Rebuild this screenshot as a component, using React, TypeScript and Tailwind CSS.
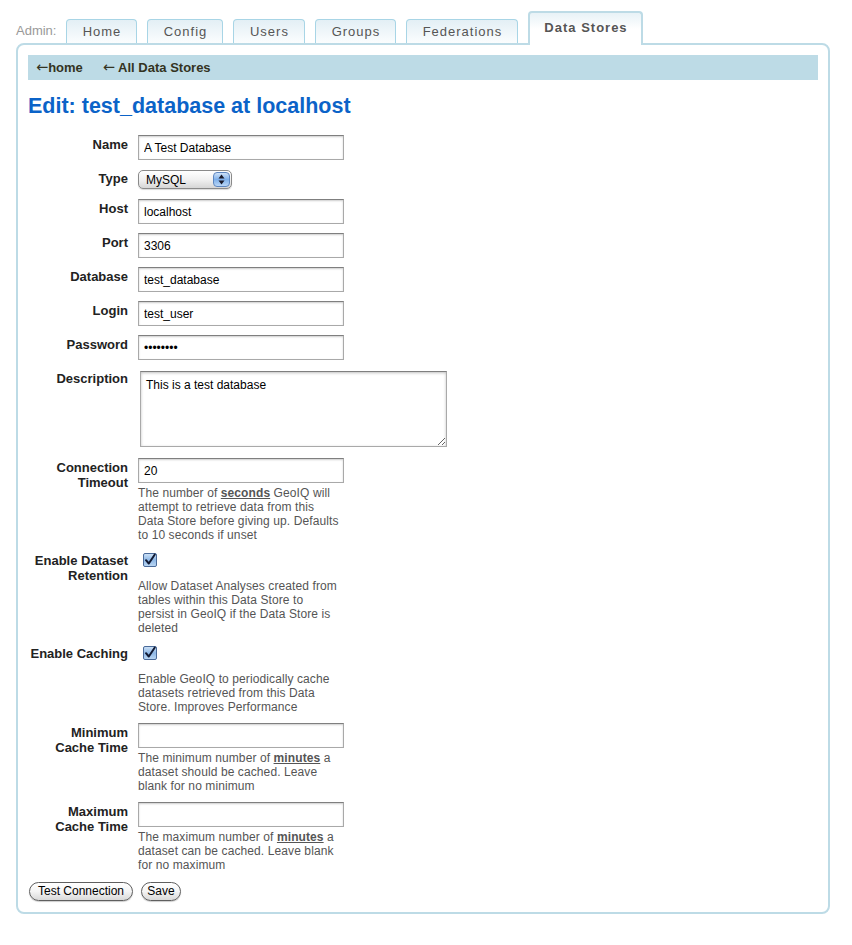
import React from "react";

const tabs = [
  { label: "Home", w: "w-[71px]" },
  { label: "Config", w: "w-[76px]" },
  { label: "Users", w: "w-[72px]" },
  { label: "Groups", w: "w-[81px]" },
  { label: "Federations", w: "w-[112px]" },
];

function Row({ label, children }: { label: React.ReactNode; children: React.ReactNode }) {
  return (
    <div className="flex mb-[9px]">
      <div className="w-[100px] shrink-0 text-right pt-[2px] font-bold text-[13px] leading-[15px] text-[#222]">
        {label}
      </div>
      <div className="ml-[10px]">{children}</div>
    </div>
  );
}

function TextInput({ value, type = "text" }: { value?: string; type?: string }) {
  return (
    <input
      type={type}
      defaultValue={value}
      className="block w-[206px] h-[25px] border border-[#a9a9a9] border-t-[#7f7f7f] shadow-[inset_0_1px_2px_rgba(0,0,0,0.2)] px-[5px] text-[12px] text-black outline-none bg-white"
    />
  );
}

function Help({ children }: { children: React.ReactNode }) {
  return <div className="text-[12px] leading-[14px] text-[#555] whitespace-nowrap tracking-[0.1px]">{children}</div>;
}

function Checkbox() {
  return (
    <svg width="14" height="14" viewBox="0 0 14 14" className="block">
      <defs>
        <linearGradient id="cb" x1="0" y1="0" x2="0" y2="1">
          <stop offset="0" stopColor="#cfe3f7" />
          <stop offset="0.5" stopColor="#8fb8e6" />
          <stop offset="1" stopColor="#bcd8f4" />
        </linearGradient>
      </defs>
      <rect x="0.5" y="0.5" width="13" height="13" rx="1.5" fill="url(#cb)" stroke="#4a6a99" />
      <path d="M3 7.2 L5.8 10.5 L11.8 1.5" fill="none" stroke="#111a33" strokeWidth="2" strokeLinecap="round" strokeLinejoin="round" />
    </svg>
  );
}

function Select() {
  return (
    <div className="relative w-[94px] h-[19px] rounded-[5px] border border-[#8a8a8a] bg-gradient-to-b from-white via-[#f1f1f1] to-[#d6d6d6] shadow-[0_1px_1px_rgba(0,0,0,0.15)]">
      <span className="absolute left-[7px] top-[2px] text-[12px] leading-[14px] text-black">MySQL</span>
      <div className="absolute right-[1px] top-[1px] w-[17px] h-[15px] rounded-[4px] bg-gradient-to-b from-[#cfe2f8] via-[#7fb0ea] to-[#b9d6f6] border border-[#5d86c0] flex items-center justify-center">
        <svg width="7" height="11" viewBox="0 0 7 11">
          <path d="M3.5 0.5 L6.5 4.5 L0.5 4.5 Z" fill="#1a1a2a" />
          <path d="M3.5 10.5 L6.5 6.5 L0.5 6.5 Z" fill="#1a1a2a" />
        </svg>
      </div>
    </div>
  );
}

function Button({ label, w }: { label: string; w: string }) {
  return (
    <button
      className={`${w} h-[19px] rounded-full border border-[#5f5f5f] bg-gradient-to-b from-white via-[#f4f4f4] to-[#d9d9d9] text-[12px] leading-[17px] text-black shadow-[0_1px_1px_rgba(0,0,0,0.2)]`}
    >
      {label}
    </button>
  );
}

export default function App() {
  return (
    <div className="min-h-[945px] bg-white font-['Liberation_Sans',Arial,sans-serif] pt-[11px]">
      {/* Tabs */}
      <div className="relative z-10 flex items-end h-[34px] pl-[16px]">
        <span className="text-[13px] leading-[15px] text-[#999] mb-[7px] mr-[10px]">Admin:</span>
        {tabs.map((t) => (
          <div
            key={t.label}
            className={`${t.w} h-[24px] mb-[2px] mr-[10px] rounded-t-[4px] border border-b-0 border-[#a8d5e6] bg-gradient-to-b from-[#e3eff5] to-[#fbfdfe] flex items-center justify-center text-[13px] tracking-[1px] text-[#555]`}
          >
            {t.label}
          </div>
        ))}
        <div className="w-[115px] h-[34px] rounded-t-[4px] border-2 border-b-0 border-[#bddbe6] bg-gradient-to-b from-[#e8f2f7] via-white to-white flex justify-center pt-[7px] text-[13px] leading-[15px] tracking-[1px] font-bold text-[#555]">
          Data Stores
        </div>
      </div>

      {/* Panel */}
      <div className="-mt-[2px] ml-[16px] w-[814px] border-2 border-[#bddbe6] rounded-[8px] px-[10px] pt-[10px] pb-[11px]">
        <div className="h-[25px] bg-[#bddbe6] flex items-center gap-[20px] pl-[8px] text-[13px] leading-[15px] font-bold text-[#333322]">
          <span>
            <span className="font-['DejaVu_Sans'] font-normal text-[14.5px]">←</span>home
          </span>
          <span>
            <span className="font-['DejaVu_Sans'] font-normal text-[14.5px]">←</span> All Data Stores
          </span>
        </div>

        <h1 className="mt-[14px] mb-[17px] text-[21.5px] leading-[24px] font-bold text-[#0b63c8]">
          Edit: test_database at localhost
        </h1>

        <Row label="Name">
          <TextInput value="A Test Database" />
        </Row>
        <Row label="Type">
          <div className="py-[1px]">
            <Select />
          </div>
        </Row>
        <Row label="Host">
          <TextInput value="localhost" />
        </Row>
        <Row label="Port">
          <TextInput value="3306" />
        </Row>
        <Row label="Database">
          <TextInput value="test_database" />
        </Row>
        <Row label="Login">
          <TextInput value="test_user" />
        </Row>
        <Row label="Password">
          <TextInput type="password" value="password" />
        </Row>
        <Row label="Description">
          <textarea
            defaultValue="This is a test database"
            className="block m-[2px] w-[307px] h-[76px] border border-[#a9a9a9] border-t-[#7f7f7f] shadow-[inset_0_1px_3px_rgba(0,0,0,0.25)] px-[5px] py-[6px] text-[12px] leading-[14px] text-black outline-none"
          />
        </Row>
        <Row label={<>Connection<br />Timeout</>}>
          <TextInput value="20" />
          <div className="mt-[3px]">
            <Help>
              The number of <span className="font-bold underline">seconds</span> GeoIQ will
              <br />
              attempt to retrieve data from this
              <br />
              Data Store before giving up. Defaults
              <br />
              to 10 seconds if unset
            </Help>
          </div>
        </Row>
        <Row label={<>Enable Dataset<br />Retention</>}>
          <div className="mt-[2px] ml-[5px]">
            <Checkbox />
          </div>
          <div className="mt-[12px]">
            <Help>
              Allow Dataset Analyses created from
              <br />
              tables within this Data Store to
              <br />
              persist in GeoIQ if the Data Store is
              <br />
              deleted
            </Help>
          </div>
        </Row>
        <Row label="Enable Caching">
          <div className="mt-[2px] ml-[5px]">
            <Checkbox />
          </div>
          <div className="mt-[12px]">
            <Help>
              Enable GeoIQ to periodically cache
              <br />
              datasets retrieved from this Data
              <br />
              Store. Improves Performance
            </Help>
          </div>
        </Row>
        <Row label={<>Minimum<br />Cache Time</>}>
          <TextInput />
          <div className="mt-[3px]">
            <Help>
              The minimum number of <span className="font-bold underline">minutes</span> a
              <br />
              dataset should be cached. Leave
              <br />
              blank for no minimum
            </Help>
          </div>
        </Row>
        <Row label={<>Maximum<br />Cache Time</>}>
          <TextInput />
          <div className="mt-[3px]">
            <Help>
              The maximum number of <span className="font-bold underline">minutes</span> a
              <br />
              dataset can be cached. Leave blank
              <br />
              for no maximum
            </Help>
          </div>
        </Row>

        <div className="flex gap-[8px] mt-[10px] pl-[1px]">
          <Button label="Test Connection" w="w-[104px]" />
          <Button label="Save" w="w-[40px]" />
        </div>
      </div>
    </div>
  );
}
